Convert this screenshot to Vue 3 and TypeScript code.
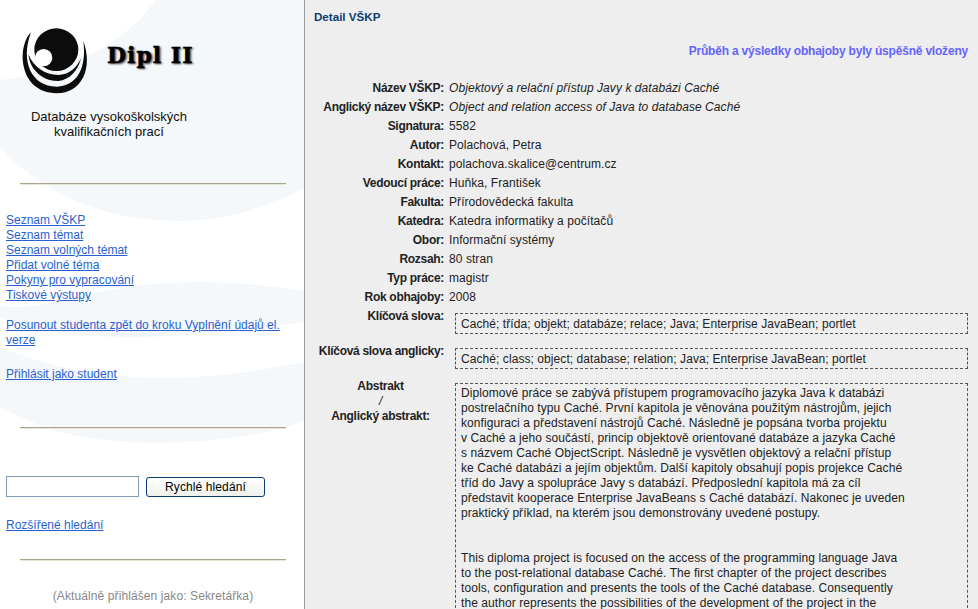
<template>
  <div class="page">
    <aside class="side">
      <svg class="swoosh" width="304" height="609" viewBox="0 0 304 609" aria-hidden="true">
        <path d="M155 0C130 40 70 72 0 80V148C45 195 105 221 180 221C225 221 270 207 304 188V0Z" fill="#f5f8fa" />
        <path d="M304 291C230 278 150 280 100 292C60 301 30 310 0 306V318C60 340 150 345 304 322Z" fill="#f5f8fa" />
        <path d="M0 347C90 385 190 385 304 362V421C240 445 130 450 60 432C35 425 15 415 0 407Z" fill="#f5f8fa" />
      </svg>

      <div class="side-body">
        <div class="brand">
          <svg class="logo" width="80" height="70" viewBox="0 0 240 210" aria-hidden="true">
            <path d="M48 22C5 65 10 203 125 205C200 205 235 130 205 48C215 125 190 182 125 185C50 185 15 110 48 22Z" fill="#0c0c0c" />
            <path d="M40 88C45 140 90 170 130 168C165 165 190 135 198 100C185 130 160 150 130 150C90 150 55 125 40 88Z" fill="#0c0c0c" />
            <ellipse cx="124" cy="74" rx="66" ry="64" fill="#0c0c0c" />
            <circle cx="86" cy="98" r="26" fill="#fff" />
          </svg>
          <span class="brand-name">Dipl II</span>
        </div>
        <p class="tagline">Databáze vysokoškolských<br />kvalifikačních prací</p>
        <hr class="rule rule-top" />

        <nav class="links">
          <a v-for="item in mainLinks" :key="item" href="#">{{ item }}</a>
        </nav>
        <nav class="links links-gap">
          <a href="#">Posunout studenta zpět do kroku Vyplnění údajů el. verze</a>
        </nav>
        <nav class="links links-gap-small">
          <a href="#">Přihlásit jako student</a>
        </nav>
        <hr class="rule rule-mid" />

        <form class="search" @submit.prevent>
          <input class="search-input" type="text" />
          <button class="search-btn" type="submit">Rychlé hledání</button>
        </form>
        <nav class="links links-adv">
          <a href="#">Rozšířené hledání</a>
        </nav>
        <hr class="rule rule-low" />
        <p class="who">(Aktuálně přihlášen jako: Sekretářka)</p>
      </div>
    </aside>

    <main class="content">
      <h1 class="title">Detail VŠKP</h1>
      <p class="notice">Průběh a výsledky obhajoby byly úspěšně vloženy</p>

      <dl class="fields">
        <div v-for="row in rows" :key="row.label" class="row">
          <dt>{{ row.label }}:</dt>
          <dd :class="{ italic: row.italic }">{{ row.value }}</dd>
        </div>
      </dl>

      <div class="boxed boxed-first">
        <div class="boxed-label">Klíčová slova:</div>
        <div class="dashed">Caché; třída; objekt; databáze; relace; Java; Enterprise JavaBean; portlet</div>
      </div>
      <div class="boxed boxed-second">
        <div class="boxed-label">Klíčová slova anglicky:</div>
        <div class="dashed">Caché; class; object; database; relation; Java; Enterprise JavaBean; portlet</div>
      </div>
      <div class="boxed boxed-abstract">
        <div class="boxed-label">
          <div class="abstract-names">Abstrakt<span>/</span>Anglický abstrakt:</div>
        </div>
        <div class="dashed abstract">
          <p>{{ abstractCs }}</p>
          <p>{{ abstractEn }}</p>
        </div>
      </div>
    </main>
  </div>
</template>

<script setup lang="ts">
type Row = { label: string; value: string; italic?: boolean };

const mainLinks: string[] = [
  "Seznam VŠKP",
  "Seznam témat",
  "Seznam volných témat",
  "Přidat volné téma",
  "Pokyny pro vypracování",
  "Tiskové výstupy",
];

const rows: Row[] = [
  { label: "Název VŠKP", value: "Objektový a relační přístup Javy k databázi Caché", italic: true },
  { label: "Anglický název VŠKP", value: "Object and relation access of Java to database Caché", italic: true },
  { label: "Signatura", value: "5582" },
  { label: "Autor", value: "Polachová, Petra" },
  { label: "Kontakt", value: "polachova.skalice@centrum.cz" },
  { label: "Vedoucí práce", value: "Huňka, František" },
  { label: "Fakulta", value: "Přírodovědecká fakulta" },
  { label: "Katedra", value: "Katedra informatiky a počítačů" },
  { label: "Obor", value: "Informační systémy" },
  { label: "Rozsah", value: "80 stran" },
  { label: "Typ práce", value: "magistr" },
  { label: "Rok obhajoby", value: "2008" },
];

const abstractCs =
  "Diplomové práce se zabývá přístupem programovacího jazyka Java k databázi postrelačního typu Caché. První kapitola je věnována použitým nástrojům, jejich konfiguraci a představení nástrojů Caché. Následně je popsána tvorba projektu v\u00a0Caché a jeho součástí, princip objektově orientované databáze a jazyka Caché s\u00a0názvem Caché ObjectScript. Následně je vysvětlen objektový a relační přístup ke\u00a0Caché databázi a jejím objektům. Další kapitoly obsahují popis projekce Caché tříd do Javy a spolupráce Javy s\u00a0databází. Předposlední kapitola má za cíl představit kooperace Enterprise JavaBeans s\u00a0Caché databází. Nakonec je uveden praktický příklad, na kterém jsou demonstrovány uvedené postupy.";

const abstractEn =
  "This diploma project is focused on the access of the programming language Java to\u00a0the post-relational database Caché. The first chapter of the project describes tools, configuration and presents the tools of the Caché database. Consequently the\u00a0author represents the possibilities of the development of the project in the";
</script>

<style>
html,
body {
  margin: 0;
  height: 100%;
  overflow: hidden;
}
</style>

<style scoped>
.page {
  display: flex;
  height: 609px;
  overflow: hidden;
  font-family: "Liberation Sans", Arial, sans-serif;
  font-size: 12px;
  line-height: 15px;
  color: #222;
}

.side {
  position: relative;
  flex: 0 0 304px;
  min-width: 0;
  box-sizing: border-box;
  background: #fff;
}

.swoosh {
  position: absolute;
  inset: 0;
}

.side-body {
  position: relative;
  padding: 25px 6px 0;
}

.brand {
  display: flex;
  align-items: center;
  gap: 12px;
  padding-left: 9px;
}

.brand-name {
  margin-bottom: 10px;
  font-family: "DejaVu Serif", serif;
  font-size: 22px;
  font-weight: 700;
  line-height: 30px;
  letter-spacing: 1px;
  color: #000;
  -webkit-text-stroke: 0.5px #000;
  text-shadow: 1px 1px 2px #555, 2px 1px 2px #999;
}

.tagline {
  margin: 14px 0 0;
  width: 206px;
  text-align: center;
  font-size: 13px;
  line-height: 15px;
  color: #111;
}

.rule {
  height: 1px;
  margin: 0 12px 0 14px;
  border: 0;
  background: #aaa58f;
  box-shadow: 0 1px 0 #e9e6d8;
}

.rule-top {
  margin-top: 44px;
}

.rule-mid {
  margin-top: 45px;
}

.rule-low {
  margin-top: 26px;
}

.links {
  display: flex;
  flex-direction: column;
  align-items: flex-start;
  margin-top: 29px;
}

.links a {
  color: #2a5fd0;
  text-decoration: underline;
}

.links-gap {
  margin-top: 15px;
}

.links-gap-small {
  margin-top: 19px;
}

.links-adv {
  margin-top: 21px;
}

.search {
  display: flex;
  align-items: center;
  gap: 7px;
  margin-top: 48px;
}

.search-input {
  box-sizing: border-box;
  width: 133px;
  height: 21px;
  margin: 0;
  border: 1px solid #7f9db9;
  background: #fff;
}

.search-btn {
  box-sizing: border-box;
  width: 119px;
  height: 20px;
  padding: 0;
  border: 1px solid #0a3d73;
  border-radius: 3px;
  background: linear-gradient(#fff, #f0f0ea);
  font-family: inherit;
  font-size: 12px;
  letter-spacing: 0.1px;
  color: #000;
}

.who {
  margin: 29px -6px 0 0;
  text-align: center;
  letter-spacing: 0.1px;
  color: #888;
  width: 294px;
}

.content {
  flex: 1;
  min-width: 0;
  box-sizing: border-box;
  padding: 9px 10px 0 9px;
  border-left: 1px solid #999;
  background: #eee;
}

.title {
  margin: 0;
  font-size: 11.6px;
  font-weight: 700;
  line-height: 15px;
  color: #0a3d73;
}

.notice {
  margin: 20px 0 0;
  text-align: right;
  font-weight: 700;
  line-height: 15px;
  letter-spacing: -0.2px;
  color: #6464ff;
}

.fields {
  margin: 22px 0 0;
}

.row {
  display: flex;
  height: 19px;
  gap: 5px;
}

.row dt,
.boxed-label {
  flex: 0 0 130px;
  text-align: right;
  font-weight: 700;
  letter-spacing: -0.3px;
}

.boxed-label {
  margin-top: -4px;
}

.row dd {
  margin: 0;
  letter-spacing: 0.07px;
}

.italic {
  font-style: italic;
}

.boxed {
  display: flex;
  gap: 11px;
}

.boxed-first {
  margin-top: 4px;
}

.boxed-second {
  margin-top: 14px;
}

.boxed-abstract {
  margin-top: 14px;
}

.dashed {
  flex: 1;
  box-sizing: border-box;
  padding: 3px 5px 1px;
  border: 1px dashed #555;
  letter-spacing: 0.07px;
}

.abstract {
  padding-right: 56px;
  padding-top: 2px;
}

.abstract p {
  margin: 0 0 30px;
}

.abstract p:last-child {
  margin-bottom: 0;
}

.abstract-names {
  display: flex;
  flex-direction: column;
  align-items: center;
  padding-left: 3px;
}

.abstract-names span {
  font-weight: 400;
  font-style: italic;
}
</style>
